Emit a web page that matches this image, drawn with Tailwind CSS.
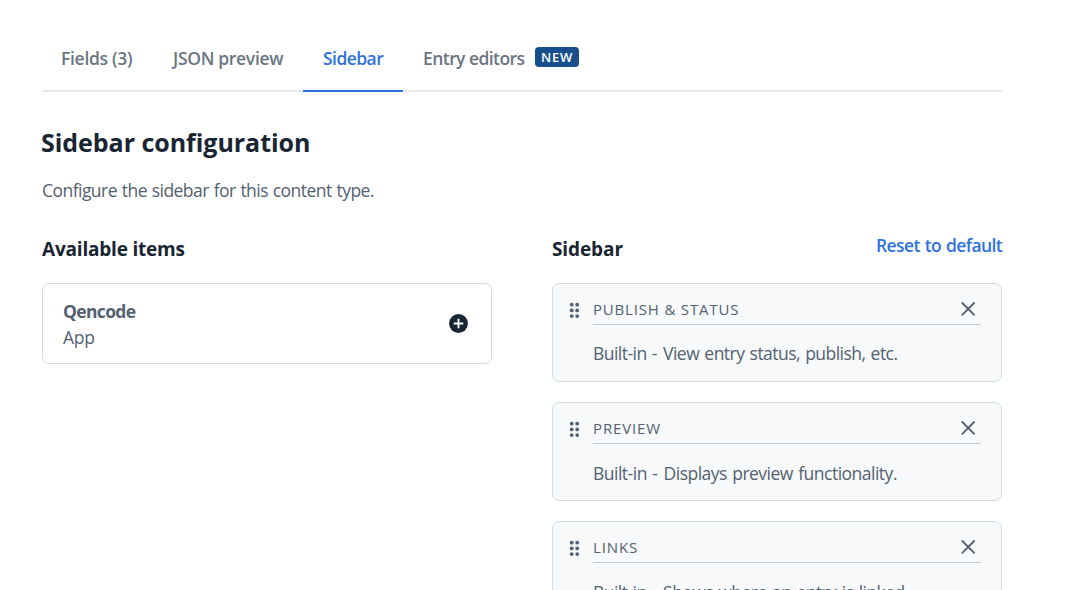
<!DOCTYPE html>
<html lang="en">
<head>
<meta charset="utf-8">
<title>Sidebar configuration</title>
<script src="https://cdn.jsdelivr.net/npm/@tailwindcss/browser@4"></script>
</head>
<body class="bg-white font-['Open_Sans',sans-serif] text-[17.5px] leading-[26px] whitespace-nowrap text-[#536171]">
<svg class="hidden">
  <symbol id="drag" viewBox="0 0 12 17"><g fill="#536171"><circle cx="2.7" cy="2.7" r="1.9"/><circle cx="8.2" cy="2.7" r="1.9"/><circle cx="2.7" cy="8.4" r="1.9"/><circle cx="8.2" cy="8.4" r="1.9"/><circle cx="2.7" cy="14.1" r="1.9"/><circle cx="8.2" cy="14.1" r="1.9"/></g></symbol>
  <symbol id="close" viewBox="0 0 14 14"><path d="M1.3 1L13.1 12.8M13.1 1L1.3 12.8" fill="none" stroke="#536171" stroke-width="1.8" stroke-linecap="round"/></symbol>
</svg>
<main class="h-[590px] w-[1070px] overflow-hidden pt-[26px] pr-[68px] pl-[42px]">
  <nav class="flex h-[66px] font-semibold text-[#6a7682] shadow-[inset_0_-2px_0_#e5ebed]">
    <a class="w-[111px] pt-[19px] pl-[19px] tracking-[-0.3px]">Fields (3)</a>
    <a class="w-[150px] pt-[19px] pl-5 tracking-[-0.32px]">JSON preview</a>
    <a class="w-[100px] border-b-2 border-[#3072db] pt-[19px] pl-5 tracking-[-0.55px] text-[#3072db]">Sidebar</a>
    <a class="flex pt-[19px] pl-5"><span class="w-[112px] tracking-[-0.56px]">Entry editors</span><span class="mt-[2px] h-5 w-11 rounded-[4px] bg-[#174e8c] pl-[6px] text-[13px] leading-[21px] tracking-[0.75px] text-white">NEW</span></a>
  </nav>
  <h1 class="mt-[32px] -ml-px h-9 text-[25px] leading-9 font-bold tracking-[-0.04px] text-[#192532]">Sidebar configuration</h1>
  <p class="mt-[17px] tracking-[-0.54px] [word-spacing:0.8px]">Configure the sidebar for this content type.</p>
  <div class="mt-[29px] flex gap-[60px]">
    <section class="w-[450px]">
      <h2 class="h-[51px] pt-1 text-[19px] font-bold tracking-[-0.2px] text-[#192532]">Available items</h2>
      <div class="flex h-[81px] items-center justify-between rounded-[7px] border border-[#d3dce0] pr-[23px] pl-5">
        <div><div class="font-bold tracking-[-0.65px]">Qencode</div><div class="tracking-[-0.2px]">App</div></div>
        <svg class="size-[19px]" viewBox="0 0 19 19"><circle cx="9.5" cy="9.5" r="9.4" fill="#192532"/><path d="M9.5 4.7V14.3M4.7 9.5H14.3" stroke="#fff" stroke-width="1.9"/></svg>
      </div>
    </section>
    <section class="w-[450px]">
      <div class="flex h-[51px] justify-between">
        <h2 class="pt-1 text-[19px] font-bold tracking-[-0.1px] text-[#192532]">Sidebar</h2>
        <a class="font-semibold tracking-[-0.62px] text-[#3072db] [word-spacing:1px]">Reset to default</a>
      </div>
      <div class="flex flex-col gap-5">
        <div class="flex h-[99px] rounded-[7px] border border-[#d3dce0] bg-[#f7f9fa] pr-5 pl-4">
          <svg class="mt-[18px] mr-3 h-[17px] w-3"><use href="#drag"/></svg>
          <div class="flex-1">
            <div class="flex h-[41px] justify-between border-b border-[#c0ccd6] pr-[6px] text-[15px]"><span class="pt-[12px] tracking-[0.82px]">PUBLISH &amp; STATUS</span><svg class="mt-[18px] size-[14px]"><use href="#close"/></svg></div>
            <p class="pt-[15px] tracking-[-0.54px] [word-spacing:1.2px]">Built-in <span class="pr-[1px]">-</span> View entry status, publish, etc.</p>
          </div>
        </div>
        <div class="flex h-[99px] rounded-[7px] border border-[#d3dce0] bg-[#f7f9fa] pr-5 pl-4">
          <svg class="mt-[18px] mr-3 h-[17px] w-3"><use href="#drag"/></svg>
          <div class="flex-1">
            <div class="flex h-[41px] justify-between border-b border-[#c0ccd6] pr-[6px] text-[15px]"><span class="pt-[12px] tracking-[0.87px]">PREVIEW</span><svg class="mt-[18px] size-[14px]"><use href="#close"/></svg></div>
            <p class="pt-[16px] tracking-[-0.5px] [word-spacing:1.2px]">Built-in <span class="pr-[1px]">-</span> Displays preview functionality.</p>
          </div>
        </div>
        <div class="flex h-[99px] rounded-[7px] border border-[#d3dce0] bg-[#f7f9fa] pr-5 pl-4">
          <svg class="mt-[18px] mr-3 h-[17px] w-3"><use href="#drag"/></svg>
          <div class="flex-1">
            <div class="flex h-[41px] justify-between border-b border-[#c0ccd6] pr-[6px] text-[15px]"><span class="pt-[12px] tracking-[0.87px]">LINKS</span><svg class="mt-[18px] size-[14px]"><use href="#close"/></svg></div>
            <p class="pt-[16px] tracking-[-0.54px] [word-spacing:1.2px]">Built-in <span class="pr-[1px]">-</span> Shows where an entry is linked.</p>
          </div>
        </div>
      </div>
    </section>
  </div>
</main>
</body>
</html>
